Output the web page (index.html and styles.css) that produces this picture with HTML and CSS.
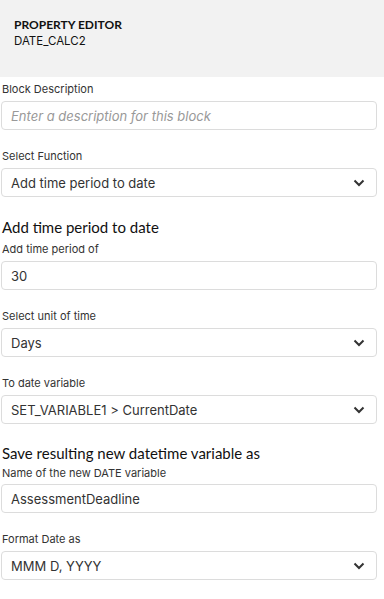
FILE: index.html
```html
<!DOCTYPE html>
<html lang="en">
<head>
    <meta charset="UTF-8">
    <meta name="viewport" content="width=device-width, initial-scale=1.0">
    <title>Property Editor</title>
    <link rel="stylesheet" href="styles.css">
</head>
<body>
    <!-- Header -->
    <div class="header">
        <div class="header-title">PROPERTY EDITOR</div>
        <div class="header-sub">DATE_CALC2</div>
    </div>

    <div class="form">
        <label class="field-label">Block Description</label>
        <div class="box"><span class="placeholder">Enter a description for this block</span></div>

        <label class="field-label">Select Function</label>
        <div class="box select">
            <span>Add time period to date</span>
            <svg class="chevron" width="12" height="8" viewBox="0 0 12 8"><path d="M1.5 1.5 L6 6 L10.5 1.5" fill="none" stroke="#333" stroke-width="2"/></svg>
        </div>

        <h2 class="section-title">Add time period to date</h2>

        <label class="field-label tight">Add time period of</label>
        <div class="box"><span>30</span></div>

        <label class="field-label">Select unit of time</label>
        <div class="box select">
            <span>Days</span>
            <svg class="chevron" width="12" height="8" viewBox="0 0 12 8"><path d="M1.5 1.5 L6 6 L10.5 1.5" fill="none" stroke="#333" stroke-width="2"/></svg>
        </div>

        <label class="field-label">To date variable</label>
        <div class="box select">
            <span>SET_VARIABLE1 &gt; CurrentDate</span>
            <svg class="chevron" width="12" height="8" viewBox="0 0 12 8"><path d="M1.5 1.5 L6 6 L10.5 1.5" fill="none" stroke="#333" stroke-width="2"/></svg>
        </div>

        <h2 class="section-title second">Save resulting new datetime variable as</h2>

        <label class="field-label tight close">Name of the new DATE variable</label>
        <div class="box"><span>AssessmentDeadline</span></div>

        <label class="field-label">Format Date as</label>
        <div class="box select">
            <span>MMM D, YYYY</span>
            <svg class="chevron" width="12" height="8" viewBox="0 0 12 8"><path d="M1.5 1.5 L6 6 L10.5 1.5" fill="none" stroke="#333" stroke-width="2"/></svg>
        </div>
    </div>
</body>
</html>
```

FILE: styles.css
```css
body {
    margin: 0;
    font-family: Inter, "Liberation Sans", sans-serif;
    background-color: #fff;
    color: #333;
}
.header {
    height: 77px;
    box-sizing: border-box;
    padding: 17px 14px 0;
    background-color: #f2f2f2;
    font-family: Lato, sans-serif;
    font-size: 12px;
    color: #111;
}
.header-title {
    font-weight: bold;
    line-height: 16px;
}
.header-sub {
    line-height: 17px;
    font-family: Inter, sans-serif;
    font-size: 11.5px;
}
.form {
    padding: 4px 7px 0 1px;
}
.field-label {
    display: block;
    margin: 18px 0 4px 1px;
    font-size: 11px;
    line-height: 16px;
    color: #333;
}
.form > .field-label:first-child {
    margin-top: 0;
}
.field-label.tight {
    margin-top: 4px;
}
.field-label.close {
    margin: 2px 0 3px 1px;
}
.box {
    height: 29px;
    box-sizing: border-box;
    display: flex;
    align-items: center;
    justify-content: space-between;
    padding: 0 10px 0 9px;
    border: 1px solid #dcdcdc;
    border-radius: 4px;
    font-size: 13px;
    color: #333;
}
.placeholder {
    font-style: italic;
    color: #999;
}
.chevron {
    margin-right: 1px;
}
.section-title {
    margin: 20px 0 0 1px;
    font-family: Lato, sans-serif;
    font-size: 15px;
    font-weight: normal;
    line-height: 20px;
    color: #111;
}
.section-title.second {
    margin-top: 19px;
}
```
